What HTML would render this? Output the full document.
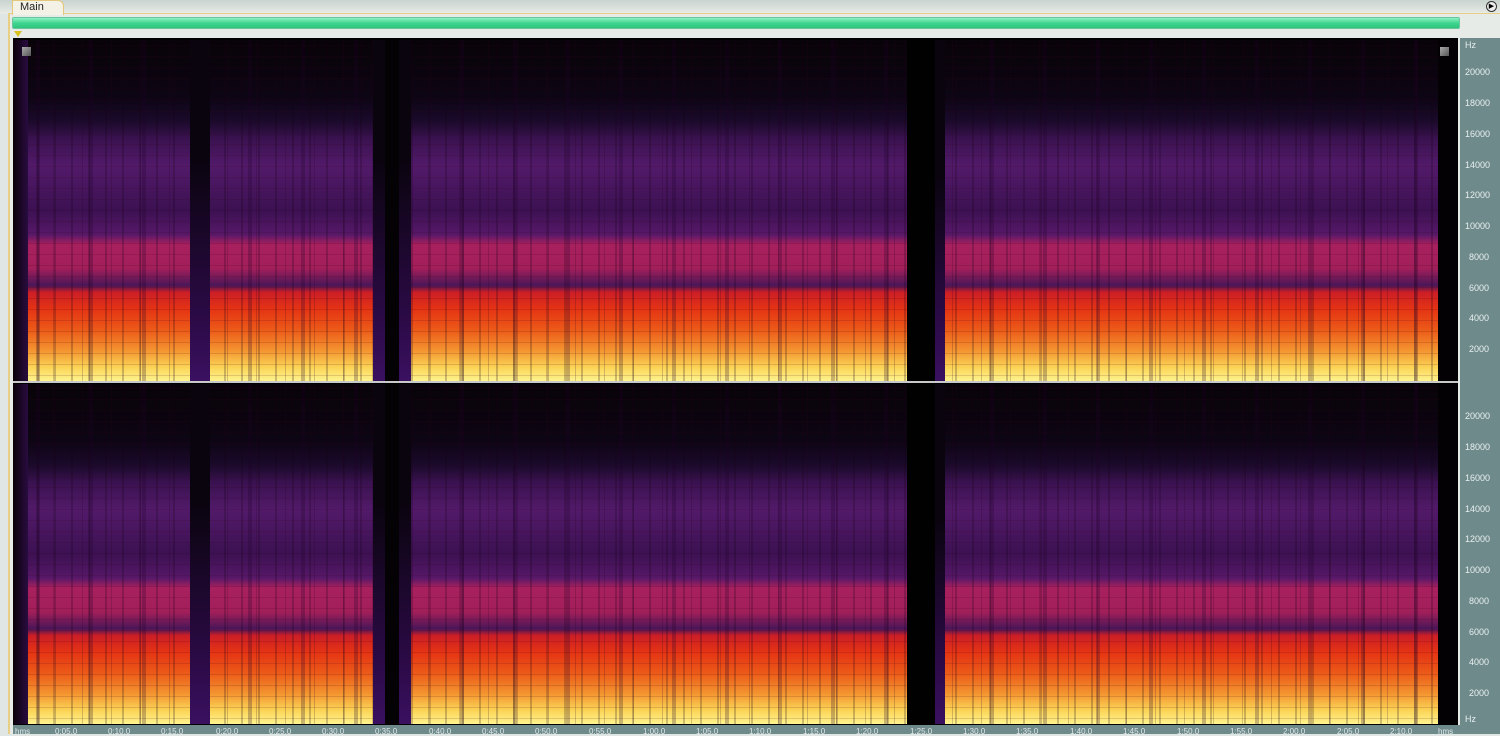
<!DOCTYPE html>
<html><head><style>
*{margin:0;padding:0;box-sizing:border-box}
body{width:1500px;height:734px;overflow:hidden;background:#dfe6e3;font-family:"Liberation Sans",sans-serif;position:relative}
.tabbar{position:absolute;left:0;top:0;width:1500px;height:14px;background:linear-gradient(#c9d3cf,#e9ece6)}
.tab{position:absolute;left:12px;top:0;width:52px;height:15px;background:#f4f2e6;border:1px solid #e3c77a;border-bottom:none;border-radius:0 6px 0 0;font-size:11px;padding-left:7px;line-height:13px;color:#222}
.panel{position:absolute;left:8px;top:13px;width:1492px;height:721px;background:#e6ebe8;border-left:2px solid #e8cf86;border-top:1px solid #e8cf86}
.green{position:absolute;left:12px;top:17px;width:1448px;height:12px;background:linear-gradient(#8ff0c4,#3fd690 50%,#2fc47e);border:1px solid #6ac49c;border-radius:2px}
.spec{position:absolute;left:13px;width:1445px;background:#000;overflow:hidden}
.ch{position:absolute;left:0;width:1445px;overflow:hidden}
.base{position:absolute;inset:0;background:linear-gradient(#080308 0%,#0d0514 17%,#1b0a2c 24%,#3a1250 29%,#521a6a 37%,#3c1152 50%,#561868 57%,#a8205e 60%,#a21f5a 67%,#4a1658 72%,#cc1e26 74%,#e53414 79%,#ec5a18 85%,#f49430 91%,#fbd456 96%,#fff38e 100%)}
.tex{position:absolute;inset:0;background:
repeating-linear-gradient(90deg,rgba(0,0,0,0) 0 7px,rgba(20,0,20,.22) 7px 9px,rgba(0,0,0,0) 9px 17px),
repeating-linear-gradient(90deg,rgba(0,0,0,0) 0 11px,rgba(40,0,30,.2) 11px 12px,rgba(0,0,0,0) 12px 29px),
repeating-linear-gradient(90deg,rgba(0,0,0,0) 0 23px,rgba(30,0,40,.25) 23px 27px,rgba(0,0,0,0) 27px 53px)}
.tex2{position:absolute;inset:0;background:repeating-linear-gradient(0deg,rgba(0,0,0,0) 0 5px,rgba(60,0,20,.15) 5px 6px,rgba(0,0,0,0) 6px 11px)}
.col{position:absolute;top:0;bottom:0}
.axis{position:absolute;left:1460px;top:38px;width:40px;height:696px;background:#6f8a8b}
.axis span{position:absolute;left:5px;font-size:9px;color:#e8f0f0}
.ruler{position:absolute;left:13px;top:725px;width:1447px;height:9px;background:#6f8a8b}
.ruler span{position:absolute;top:2px;font-size:8px;color:#dfe8e8}
.sep{position:absolute;left:13px;top:381px;width:1445px;height:2px;background:#c9c9c9}
.btn{position:absolute;left:22px;top:47px;width:9px;height:9px;background:linear-gradient(135deg,#aaa,#555)}
</style></head><body>
<div class="tabbar"></div>
<div class="panel"></div>
<div class="tab">Main</div>
<div style="position:absolute;left:1486px;top:1px;width:11px;height:11px;border-radius:50%;border:1px solid #333;background:#eee;font-size:7px;line-height:9px;text-align:center">▶</div>
<div class="green"></div>
<div style="position:absolute;left:14px;top:31px;width:0;height:0;border-left:4px solid transparent;border-right:4px solid transparent;border-top:6px solid #d8c020"></div>
<div class="spec" style="top:38px;height:688px"></div>
<div class="ch" style="left:13px;top:40px;height:341px">
<div class="base"></div><div class="tex"></div><div class="tex2"></div>
<div class="col" style="left:0;width:15px;background:linear-gradient(90deg,#080008,#2a0c40)"></div>
<div class="col" style="left:177px;width:20px;background:linear-gradient(#0a040f 35%,#2a0a44 80%,#3a1060)"></div>
<div class="col" style="left:360px;width:12px;background:linear-gradient(#0a040f 35%,#2a0a44 80%,#3a1060)"></div>
<div class="col" style="left:372px;width:14px;background:#050206"></div>
<div class="col" style="left:386px;width:12px;background:linear-gradient(#0a040f 35%,#2a0a44 80%,#3a1060)"></div>
<div class="col" style="left:894px;width:28px;background:#020102"></div>
<div class="col" style="left:922px;width:10px;background:linear-gradient(#0a040f 40%,#2a0a44 80%,#3a1060)"></div>
<div class="col" style="left:1425px;width:20px;background:#030103"></div>
</div>
<div class="sep"></div>
<div class="ch" style="left:13px;top:384px;height:340px">
<div class="base"></div><div class="tex"></div><div class="tex2"></div>
<div class="col" style="left:0;width:15px;background:linear-gradient(90deg,#080008,#2a0c40)"></div>
<div class="col" style="left:177px;width:20px;background:linear-gradient(#0a040f 35%,#2a0a44 80%,#3a1060)"></div>
<div class="col" style="left:360px;width:12px;background:linear-gradient(#0a040f 35%,#2a0a44 80%,#3a1060)"></div>
<div class="col" style="left:372px;width:14px;background:#050206"></div>
<div class="col" style="left:386px;width:12px;background:linear-gradient(#0a040f 35%,#2a0a44 80%,#3a1060)"></div>
<div class="col" style="left:894px;width:28px;background:#020102"></div>
<div class="col" style="left:922px;width:10px;background:linear-gradient(#0a040f 40%,#2a0a44 80%,#3a1060)"></div>
<div class="col" style="left:1425px;width:20px;background:#030103"></div>
</div>
<div class="btn"></div>
<div class="btn" style="left:1440px"></div>
<div class="axis">
<span style="top:2px">Hz</span>
<span style="top:29px">20000</span><span style="top:60px">18000</span><span style="top:91px">16000</span><span style="top:122px">14000</span><span style="top:152px">12000</span><span style="top:183px">10000</span><span style="top:214px;left:9px">8000</span><span style="top:245px;left:9px">6000</span><span style="top:275px;left:9px">4000</span><span style="top:306px;left:9px">2000</span>
<span style="top:373px">20000</span><span style="top:404px">18000</span><span style="top:435px">16000</span><span style="top:466px">14000</span><span style="top:496px">12000</span><span style="top:527px">10000</span><span style="top:558px;left:9px">8000</span><span style="top:589px;left:9px">6000</span><span style="top:619px;left:9px">4000</span><span style="top:650px;left:9px">2000</span><span style="top:676px">Hz</span>
</div>
<div class="ruler">
<span style="left:2px">hms</span><span style="left:42px">0:05.0</span><span style="left:95px">0:10.0</span><span style="left:148px">0:15.0</span><span style="left:203px">0:20.0</span><span style="left:256px">0:25.0</span><span style="left:309px">0:30.0</span><span style="left:362px">0:35.0</span><span style="left:416px">0:40.0</span><span style="left:469px">0:45.0</span><span style="left:522px">0:50.0</span><span style="left:576px">0:55.0</span><span style="left:630px">1:00.0</span><span style="left:683px">1:05.0</span><span style="left:736px">1:10.0</span><span style="left:790px">1:15.0</span><span style="left:843px">1:20.0</span><span style="left:897px">1:25.0</span><span style="left:950px">1:30.0</span><span style="left:1003px">1:35.0</span><span style="left:1057px">1:40.0</span><span style="left:1110px">1:45.0</span><span style="left:1164px">1:50.0</span><span style="left:1217px">1:55.0</span><span style="left:1270px">2:00.0</span><span style="left:1324px">2:05.0</span><span style="left:1377px">2:10.0</span><span style="left:1425px">hms</span>
</div>
</body></html>
